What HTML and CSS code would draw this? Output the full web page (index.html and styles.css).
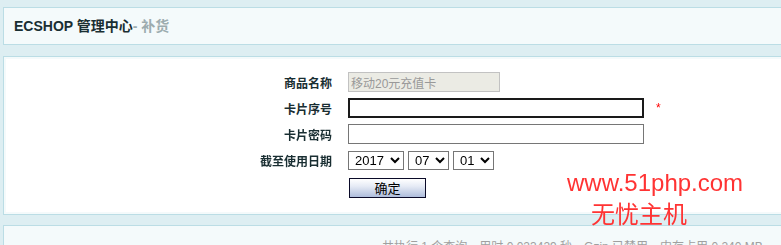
FILE: index.html
```html
<!DOCTYPE html>
<html lang="zh-CN">
  <head>
    <meta charset="UTF-8" />
    <title>ECSHOP 管理中心 - 补货</title>
    <link rel="stylesheet" href="styles.css">
  </head>
  <body>
    <div class="page">
      <h1 class="page-title">
        ECSHOP 管理中心<span class="action-name">- 补货</span>
      </h1>

      <div class="main-div">
        <form class="main-inner" id="replenishForm">
          <div class="form-grid">
            <label class="label">商品名称</label>
            <div class="field">
              <input type="text" class="text-input short" value="移动20元充值卡" disabled />
            </div>

            <label class="label">卡片序号</label>
            <div class="field">
              <input type="text" class="text-input long focused" id="cardSn" autofocus />
              <span class="require">*</span>
            </div>

            <label class="label">卡片密码</label>
            <div class="field">
              <input type="text" class="text-input long" id="cardPassword" />
            </div>

            <label class="label">截至使用日期</label>
            <div class="field dates">
              <select class="date-select year">
                <option>2017</option>
              </select>
              <select class="date-select">
                <option>07</option>
              </select>
              <select class="date-select">
                <option>01</option>
              </select>
            </div>

            <div></div>
            <div class="field submit-row">
              <button type="submit" class="button">确定</button>
            </div>
          </div>
        </form>
      </div>

      <div class="footer">
        共执行 1 个查询，用时 0.023429 秒，Gzip 已禁用，内存占用 0.240 MB
      </div>
    </div>

    <div class="watermark">
      <div class="watermark-url">www.51php.com</div>
      <div class="watermark-name">无忧主机</div>
    </div>
  </body>
</html>
```

FILE: styles.css
```css
body,
html {
  margin: 0;
  padding: 0;
  background-color: #ddeef2;
  font-family: "Liberation Sans", "Noto Sans CJK SC", sans-serif;
  font-size: 12px;
  color: #192e32;
  overflow: hidden;
}

.page {
  width: 1200px;
  padding: 7px 0 0 3px;
}

.page-title {
  margin: 0 0 11px;
  height: 36px;
  line-height: 36px;
  padding: 0 0 0 10px;
  background-color: #f4fafb;
  border: 1px solid #bbdde5;
  font-size: 14px;
  font-weight: bold;
  color: #192e32;
}

.action-name {
  color: #9cacaf;
}

.main-div {
  background-color: #f4fafb;
  border: 1px solid #bbdde5;
  padding: 2px;
}

.main-inner {
  margin: 0;
  background-color: #ffffff;
  padding: 10px 0 9px;
}

.form-grid {
  display: grid;
  grid-template-columns: 326px auto;
  column-gap: 16px;
  align-items: center;
}

.label {
  text-align: right;
  font-weight: bold;
  color: #192e32;
}

.field {
  display: flex;
  align-items: center;
  height: 26px;
}

.text-input {
  box-sizing: border-box;
  height: 20px;
  margin: 0;
  padding: 0 2px;
  border: 1px solid #767676;
  background-color: #ffffff;
  font-family: "Liberation Sans", "Noto Sans CJK SC", sans-serif;
  font-size: 12px;
  color: #000000;
  border-radius: 0;
}

.text-input:focus {
  outline: none;
}

.text-input.short {
  width: 152px;
}

.text-input.long {
  width: 296px;
}

.text-input[disabled] {
  background-color: #ebebe4;
  border-color: #c2c2c2;
  color: #999999;
}

.text-input.focused {
  border: 2px solid #1a1a1a;
}

.require {
  color: #ff0000;
  margin-left: 12px;
  font-size: 12px;
}

.dates {
  gap: 4px;
}

.date-select {
  box-sizing: border-box;
  height: 19px;
  width: 41px;
  margin: 0;
  border: 1px solid #767676;
  border-radius: 0;
  background-color: #ffffff;
  font-family: "Liberation Sans", sans-serif;
  font-size: 13px;
  color: #000000;
  padding: 0 0 0 2px;
}

.date-select.year {
  width: 56px;
}

.submit-row {
  height: 30px;
}

.button {
  box-sizing: border-box;
  width: 77px;
  height: 20px;
  margin-left: 1px;
  padding: 0;
  border: 1px solid #0a0a28;
  background: linear-gradient(#ffffff, #e6ebf5 40%, #aebddc);
  font-family: "Noto Sans CJK SC", sans-serif;
  font-size: 13px;
  line-height: 18px;
  color: #000000;
  cursor: pointer;
}

.footer {
  margin-top: 10px;
  height: 40px;
  background-color: #f4fafb;
  border: 1px solid #bbdde5;
  padding: 11px 0 0 378px;
  box-sizing: border-box;
  color: #a0a0a0;
  font-size: 12px;
}

.watermark {
  position: absolute;
  left: 567px;
  top: 168px;
  color: #ff3333;
  line-height: 30px;
}

.watermark-url {
  font-family: "Liberation Sans", sans-serif;
  font-size: 24px;
}

.watermark-name {
  margin-left: 24px;
  font-family: "Noto Sans CJK SC", sans-serif;
  font-size: 24px;
}
```
